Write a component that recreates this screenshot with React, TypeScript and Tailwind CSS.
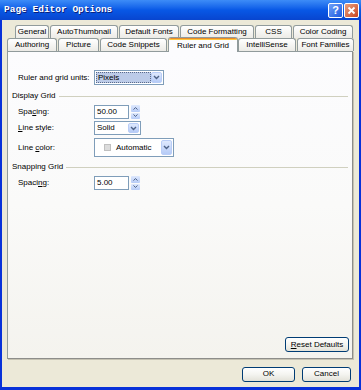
import type { ReactNode } from "react";

const ROW1 = [
  { label: "General", w: "w-[34px]" },
  { label: "AutoThumbnail", w: "w-[68px]" },
  { label: "Default Fonts", w: "w-[60px]" },
  { label: "Code Formatting", w: "w-[74px]" },
  { label: "CSS", w: "w-[37px]" },
  { label: "Color Coding", w: "w-[60px]" },
];

const ROW2 = [
  { label: "Authoring", w: "w-[50px]" },
  { label: "Picture", w: "w-[41px]" },
  { label: "Code Snippets", w: "w-[67px]" },
  { label: "Ruler and Grid", w: "w-[70px]", active: true },
  { label: "IntelliSense", w: "w-[58px]" },
  { label: "Font Families", w: "w-[57px]" },
];

function Tab({ label, w, active }: { label: string; w: string; active?: boolean }) {
  if (active) {
    return (
      <div
        className={`${w} relative z-10 -mb-px flex h-[15px] flex-none flex-col overflow-hidden rounded-t-[3px] border border-b-0 border-[#919b9c] bg-[#fcfcfe]`}
      >
        <div className="h-px flex-none bg-[#e68b2c]" />
        <div className="h-px flex-none bg-[#ffc73c]" />
        <div className="flex flex-1 items-center justify-center pb-px">{label}</div>
      </div>
    );
  }
  return (
    <div
      className={`${w} mr-px flex h-[13px] flex-none items-center justify-center whitespace-nowrap rounded-t-[3px] border border-b-0 border-[#919b9c] bg-gradient-to-b from-white to-[#ecebe6]`}
    >
      {label}
    </div>
  );
}

function Chevron() {
  return (
    <svg width="7" height="5" viewBox="0 0 7 5">
      <path d="M1 1 L3.5 3.5 L6 1" fill="none" stroke="#4d6185" strokeWidth="1.4" />
    </svg>
  );
}

function DropButton() {
  return (
    <div className="flex w-[11px] flex-none items-center justify-center rounded-[2px] border border-[#b9cdf7] bg-gradient-to-b from-[#dfe9fd] to-[#b6cbf7]">
      <Chevron />
    </div>
  );
}

function Select({ w, h, children }: { w: string; h: string; children: ReactNode }) {
  return (
    <div className={`${w} ${h} flex items-stretch border border-[#7f9db9] bg-white p-px`}>
      <div className="flex min-w-0 flex-1 items-center">{children}</div>
      <DropButton />
    </div>
  );
}

function Spinner() {
  return (
    <div className="ml-[2px] flex h-[14px] w-[9px] flex-col gap-px">
      <div className="flex flex-1 items-center justify-center rounded-[1px] bg-gradient-to-b from-[#dfe9fd] to-[#b6cbf7]">
        <svg width="5" height="3" viewBox="0 0 5 3">
          <path d="M0.5 2.5 L2.5 0.6 L4.5 2.5" fill="none" stroke="#4d6185" strokeWidth="1" />
        </svg>
      </div>
      <div className="flex flex-1 items-center justify-center rounded-[1px] bg-gradient-to-b from-[#dfe9fd] to-[#b6cbf7]">
        <svg width="5" height="3" viewBox="0 0 5 3">
          <path d="M0.5 0.5 L2.5 2.4 L4.5 0.5" fill="none" stroke="#4d6185" strokeWidth="1" />
        </svg>
      </div>
    </div>
  );
}

function NumberBox({ value }: { value: string }) {
  return (
    <div className="flex items-center">
      <div className="flex h-[14px] w-[35px] items-center border border-[#7f9db9] bg-white pl-[2px]">{value}</div>
      <Spinner />
    </div>
  );
}

function Row({ label, children }: { label: ReactNode; children: ReactNode }) {
  return (
    <div className="flex items-center pl-[10px]">
      <div className="w-[76px] flex-none">{label}</div>
      {children}
    </div>
  );
}

function GroupHeader({ title, className }: { title: string; className: string }) {
  return (
    <div className={`flex h-[10px] items-center gap-[3px] px-[4px] ${className}`}>
      <span>{title}</span>
      <div className="h-px flex-1 border-b border-[#d0d0bf] bg-[#c4c1b0]" />
    </div>
  );
}

function XpButton({ w, children }: { w: string; children: ReactNode }) {
  return (
    <div
      className={`${w} flex h-[15px] items-center justify-center rounded-[3px] border border-[#003c74] bg-gradient-to-b from-white via-[#f4f4f0] to-[#e3e2d9]`}
    >
      {children}
    </div>
  );
}

export default function App() {
  return (
    <div
      className="flex h-[390px] w-[361px] flex-col overflow-hidden bg-[#0831d9] text-[8px] text-black"
      style={{ fontFamily: '"Liberation Sans", Arial, sans-serif' }}
    >
      {/* title bar */}
      <div className="flex h-[20px] flex-none items-center bg-gradient-to-b from-[#3d8cf7] via-[#0858e6] to-[#0845cf] pl-[4px] pr-[2px]">
        <span
          className="flex-1 text-[9.5px] font-bold text-white [text-shadow:1px_1px_0_#0a1e7a]"
          style={{ fontFamily: '"Liberation Mono", "Courier New", monospace' }}
        >
          Page Editor Options
        </span>
        <div className="mr-px flex h-[15px] w-[15px] items-center justify-center rounded-[2px] border border-white bg-gradient-to-br from-[#6f9ff8] to-[#1d58de] text-[11px] font-bold text-white">
          ?
        </div>
        <div className="flex h-[15px] w-[15px] items-center justify-center rounded-[2px] border border-white bg-gradient-to-br from-[#e8a07f] to-[#c8431c]">
          <svg width="9" height="9" viewBox="0 0 9 9">
            <path d="M1.5 1.5 L7.5 7.5 M7.5 1.5 L1.5 7.5" stroke="white" strokeWidth="1.8" />
          </svg>
        </div>
      </div>

      {/* body */}
      <div className="mx-[2px] mb-[3px] flex flex-1 flex-col bg-[#ece9d8] pl-[5px] pr-[6px]">
        <div className="flex flex-none pl-[8px] pt-[5px]">
          {ROW1.map((t) => (
            <Tab key={t.label} label={t.label} w={t.w} />
          ))}
        </div>
        <div className="-mt-px flex h-[14px] flex-none items-end">
          {ROW2.map((t) => (
            <Tab key={t.label} label={t.label} w={t.w} active={t.active} />
          ))}
        </div>

        {/* panel */}
        <div className="flex flex-1 flex-col border border-[#919b9c] border-b-[#8d8d8a] border-r-[#8d8d8a] bg-gradient-to-b from-[#fcfcfe] via-[#fafaf9] to-[#f4f3ee] shadow-[1px_1px_0_#c5c2b2]">
          <div className="mt-[18px]">
            <Row label="Ruler and grid units:">
              <Select w="w-[70px]" h="h-[15px]">
                <div className="flex h-full w-full items-center border border-dotted border-[#5a6a8a] bg-[#bccbe8] pl-px">
                  Pixels
                </div>
              </Select>
            </Row>
          </div>

          <GroupHeader title="Display Grid" className="mt-[6px]" />
          <div className="mt-[4px]">
            <Row
              label={
                <>
                  Spa<u>c</u>ing:
                </>
              }
            >
              <NumberBox value="50.00" />
            </Row>
          </div>
          <div className="mt-[2px]">
            <Row
              label={
                <>
                  <u>L</u>ine style:
                </>
              }
            >
              <Select w="w-[47px]" h="h-[14px]">
                <span className="pl-px">Solid</span>
              </Select>
            </Row>
          </div>
          <div className="mt-[3px]">
            <Row
              label={
                <>
                  Line <u>c</u>olor:
                </>
              }
            >
              <Select w="w-[80px]" h="h-[19px]">
                <div className="ml-[8px] h-[7px] w-[7px] border border-[#c0c0c0] bg-[#dcdcdc]" />
                <span className="ml-[5px]">Automatic</span>
              </Select>
            </Row>
          </div>

          <GroupHeader title="Snapping Grid" className="mt-[5px]" />
          <div className="mt-[4px]">
            <Row
              label={
                <>
                  Spaci<u>n</u>g:
                </>
              }
            >
              <NumberBox value="5.00" />
            </Row>
          </div>

          <div className="mb-[6px] mr-[3px] mt-auto flex justify-end">
            <XpButton w="w-[64px]">
              <u>R</u>eset Defaults
            </XpButton>
          </div>
        </div>

        {/* dialog buttons */}
        <div className="flex h-[28px] flex-none items-center justify-end gap-[7px] pr-[2px] pt-[2px]">
          <XpButton w="w-[53px]">OK</XpButton>
          <XpButton w="w-[49px]">Cancel</XpButton>
        </div>
      </div>
    </div>
  );
}
